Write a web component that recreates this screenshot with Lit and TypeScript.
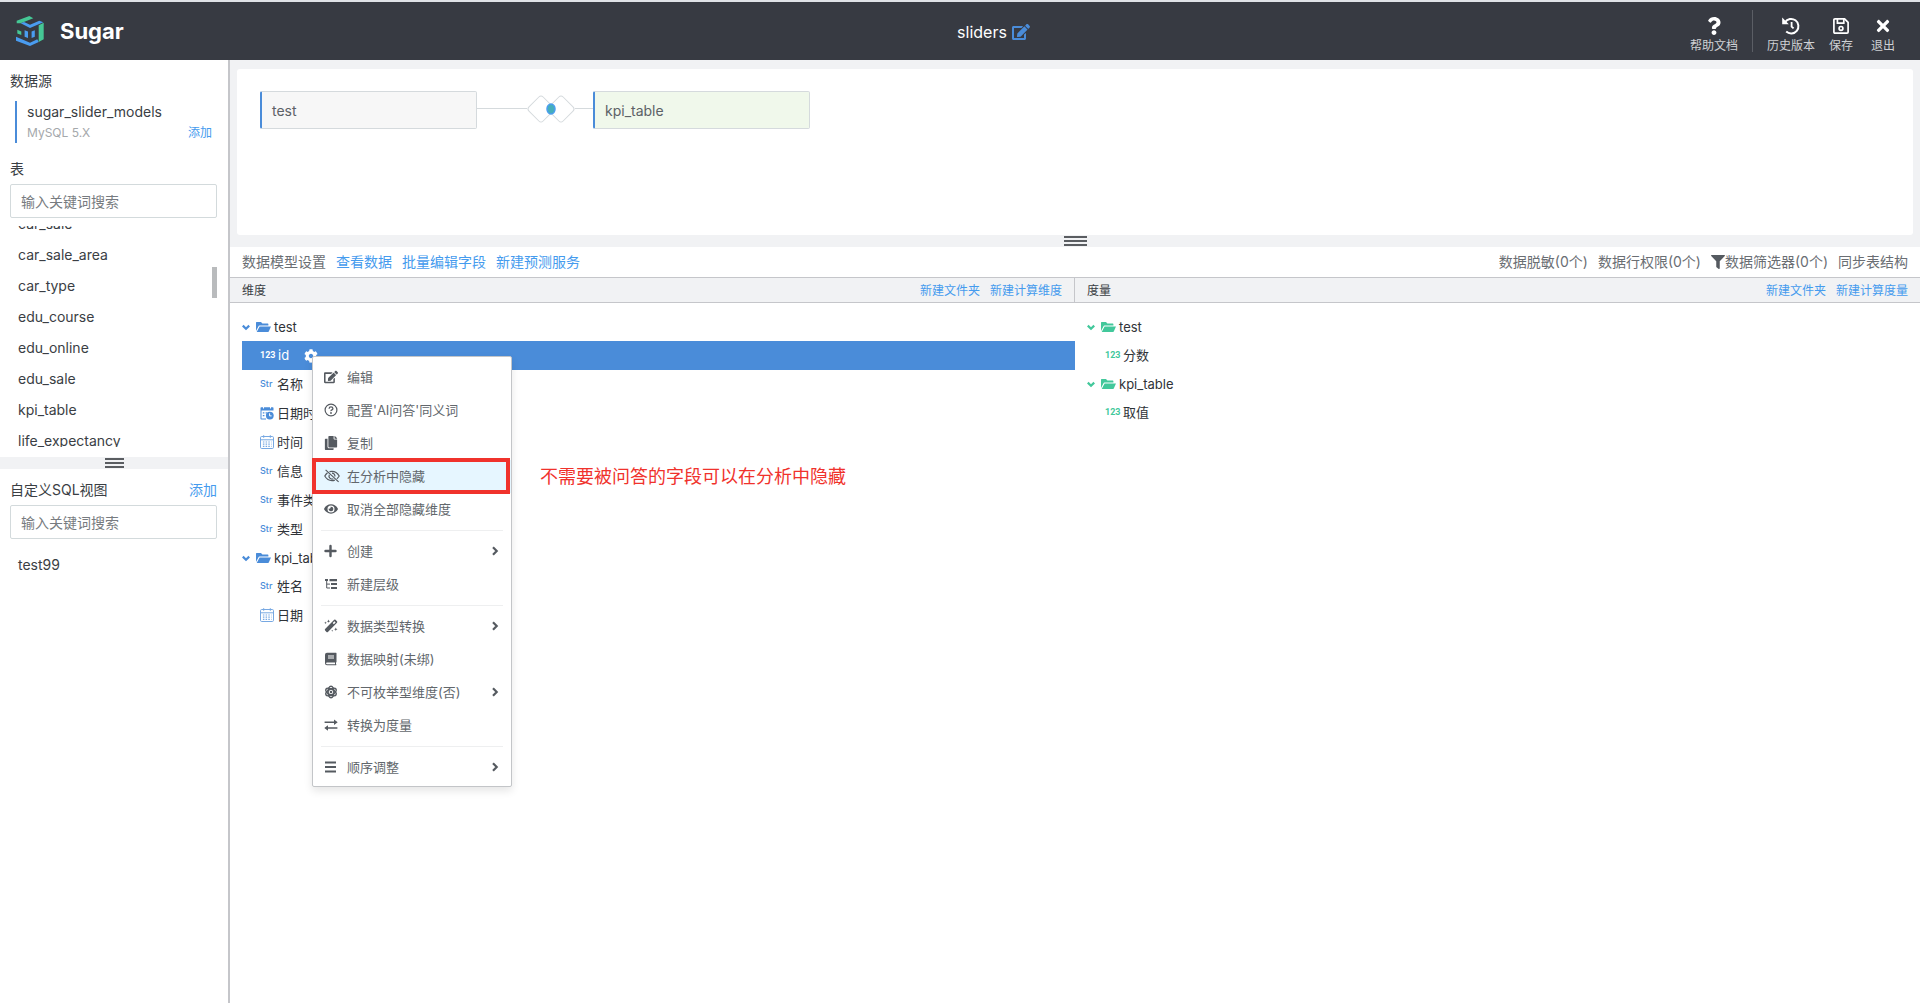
import { LitElement, html, svg, css, nothing, TemplateResult, SVGTemplateResult } from "lit";
import { customElement, property } from "lit/decorators.js";
import { classMap } from "lit/directives/class-map.js";

/* ---------- icons ---------- */

interface Glyph {
  box: string;
  body: SVGTemplateResult;
}

const solid = (box: string, d: string): Glyph => ({ box, body: svg`<path fill="currentColor" d=${d}></path>` });

const GLYPHS: Record<string, Glyph> = {
  question: solid(
    "0 0 384 512",
    "M202.021 0C122.202 0 70.503 32.703 29.914 91.026c-7.363 10.58-5.093 25.086 5.178 32.874l43.138 32.709c10.373 7.865 25.132 6.026 33.253-4.148 25.049-31.381 43.63-49.449 82.757-49.449 30.764 0 68.816 19.799 68.816 49.631 0 22.552-18.617 34.134-48.993 51.164-35.423 19.86-82.299 44.576-82.299 106.405V320c0 13.255 10.745 24 24 24h72.471c13.255 0 24-10.745 24-24v-5.773c0-42.86 125.268-44.645 125.268-160.627C377.504 66.256 286.902 0 202.021 0zM192 373.459c-38.196 0-69.271 31.075-69.271 69.271 0 38.195 31.075 69.27 69.271 69.27s69.271-31.075 69.271-69.271-31.075-69.27-69.271-69.27z"
  ),
  times: solid(
    "0 0 352 512",
    "M242.72 256l100.07-100.07c12.28-12.28 12.28-32.19 0-44.48l-22.24-22.24c-12.28-12.28-32.19-12.28-44.48 0L176 189.28 75.93 89.21c-12.28-12.28-32.19-12.28-44.48 0L9.21 111.45c-12.28 12.28-12.28 32.19 0 44.48L109.28 256 9.21 356.07c-12.28 12.28-12.28 32.19 0 44.48l22.24 22.24c12.28 12.28 32.2 12.28 44.48 0L176 322.72l100.07 100.07c12.28 12.28 32.2 12.28 44.48 0l22.24-22.24c12.28-12.28 12.28-32.19 0-44.48L242.72 256z"
  ),
  edit: solid(
    "0 0 576 512",
    "M402.6 83.2l90.2 90.2c3.8 3.8 3.8 10 0 13.8L274.4 405.6l-92.8 10.3c-12.4 1.4-22.9-9.1-21.5-21.5l10.3-92.8L388.8 83.2c3.8-3.8 10-3.8 13.8 0zm162-22.9l-48.8-48.8c-15.2-15.2-39.9-15.2-55.2 0l-35.4 35.4c-3.8 3.8-3.8 10 0 13.8l90.2 90.2c3.8 3.8 10 3.8 13.8 0l35.4-35.4c15.2-15.3 15.2-40 0-55.2zM384 346.2V448H64V128h229.8c3.2 0 6.2-1.3 8.5-3.5l40-40c7.6-7.6 2.2-20.5-8.5-20.5H48C21.5 64 0 85.5 0 112v352c0 26.5 21.5 48 48 48h352c26.5 0 48-21.5 48-48V306.2c0-10.7-12.9-16-20.5-8.5l-40 40c-2.2 2.3-3.5 5.3-3.5 8.5z"
  ),
  eye: solid(
    "0 0 576 512",
    "M572.52 241.4C518.29 135.59 410.93 64 288 64S57.68 135.64 3.48 241.41a32.35 32.35 0 0 0 0 29.19C57.71 376.41 165.07 448 288 448s230.32-71.64 284.52-177.41a32.35 32.35 0 0 0 0-29.19zM288 400a144 144 0 1 1 144-144 143.93 143.93 0 0 1-144 144zm0-240a95.31 95.31 0 0 0-25.31 3.79 47.85 47.85 0 0 1-66.9 66.9A95.78 95.78 0 1 0 288 160z"
  ),
  filter: solid(
    "0 0 512 512",
    "M487.976 0H24.028C2.71 0-8.047 25.866 7.058 40.971L192 225.941V432c0 7.831 3.821 15.17 10.237 19.662l80 55.98C298.02 518.69 320 507.493 320 487.98V225.941l184.947-184.97C520.021 25.896 509.338 0 487.976 0z"
  ),
  cog: solid(
    "0 0 512 512",
    "M487.4 315.7l-42.6-24.6c4.3-23.2 4.3-47 0-70.2l42.6-24.6c4.9-2.8 7.1-8.6 5.5-14-11.1-35.6-30-67.8-54.7-94.6-3.8-4.1-10-5.1-14.8-2.3L380.8 110c-17.9-15.4-38.5-27.3-60.8-35.1V25.8c0-5.6-3.9-10.5-9.4-11.7-36.7-8.2-74.3-7.8-109.2 0-5.5 1.2-9.4 6.1-9.4 11.7V75c-22.2 7.9-42.8 19.8-60.8 35.1L88.7 85.5c-4.9-2.8-11-1.9-14.8 2.3-24.7 26.7-43.6 58.9-54.7 94.6-1.7 5.4.6 11.2 5.5 14L67.3 221c-4.3 23.2-4.3 47 0 70.2l-42.6 24.6c-4.9 2.8-7.1 8.6-5.5 14 11.1 35.6 30 67.8 54.7 94.6 3.8 4.1 10 5.1 14.8 2.3l42.6-24.6c17.9 15.4 38.5 27.3 60.8 35.1v49.2c0 5.6 3.9 10.5 9.4 11.7 36.7 8.2 74.3 7.8 109.2 0 5.5-1.2 9.4-6.1 9.4-11.7v-49.2c22.2-7.9 42.8-19.8 60.8-35.1l42.6 24.6c4.9 2.8 11 1.9 14.8-2.3 24.7-26.7 43.6-58.9 54.7-94.6 1.5-5.5-.7-11.3-5.6-14.1zM256 336c-44.1 0-80-35.9-80-80s35.9-80 80-80 80 35.9 80 80-35.9 80-80 80z"
  ),
  copy: solid(
    "0 0 448 512",
    "M320 448v40c0 13.255-10.745 24-24 24H24c-13.255 0-24-10.745-24-24V120c0-13.255 10.745-24 24-24h72v296c0 30.879 25.121 56 56 56h168zm0-344V0H152c-13.255 0-24 10.745-24 24v368c0 13.255 10.745 24 24 24h272c13.255 0 24-10.745 24-24V128H344c-13.2 0-24-10.8-24-24zm120.971-31.029L375.029 7.029A24 24 0 0 0 358.059 0H352v96h96v-6.059a24 24 0 0 0-7.029-16.97z"
  ),
  folder: {
    box: "0 0 15 12",
    body: svg`<path fill="currentColor" d="M0 10V1.6Q0 1 .6 1H5l1.4 1.6h5.4q.6 0 .6.6v1.4H3.4Q2.8 4.600 2.500 5.200z"></path><path fill="currentColor" d="M3.600 5.600H15l-2.200 5q-.2.4-.7.4H.7z"></path>`,
  },
  history: {
    box: "0 0 18 18",
    body: svg`<g fill="none" stroke="currentColor" stroke-width="2"><path d="M3 5.200A7.300 7.300 0 1 1 4.200 14.600"></path><path d="M9.600 5v4.600l2 1.800" stroke-width="1.800"></path></g><path fill="currentColor" d="M.2.600V7.200h6.600z"></path>`,
  },
  save: {
    box: "-1 -1 18 18",
    body: svg`<g fill="none" stroke="currentColor" stroke-width="1.700"><path d="M2 .9h9.600l3.500 3.500V14q0 1.100-1.100 1.100H2Q.9 15.100.9 14V2Q.9.900 2 .900z"></path><path d="M4.400 1v4.200h6.400V1"></path><circle cx="8" cy="10.400" r="1.900"></circle></g>`,
  },
  down: {
    box: "1 0 8 8",
    body: svg`<path d="M1.800 2.600L5 5.700 8.200 2.600" fill="none" stroke="currentColor" stroke-width="2.200"></path>`,
  },
  right: {
    box: "0 0 8 10",
    body: svg`<path d="M2 1.300L5.700 5 2 8.700" fill="none" stroke="currentColor" stroke-width="2.200"></path>`,
  },
  help: {
    box: "0 0 14 14",
    body: svg`<g fill="none" stroke="currentColor"><circle cx="7" cy="7" r="5.900" stroke-width="1.200"></circle><path stroke-width="1.300" d="M5.100 5.700q.1-1.800 1.900-1.800t1.900 1.600q0 .9-1 1.400t-.9 1.300"></path></g><circle cx="7" cy="10" r=".9" fill="currentColor"></circle>`,
  },
  hidden: {
    box: "0 0 16 14",
    body: svg`<g fill="none" stroke="currentColor" stroke-width="1.200"><path d="M3.500 3.700Q1.900 5 .8 7q2.600 4.600 7.200 4.600 1.500 0 2.800-.5M5.500 2.700Q6.700 2.400 8 2.400 12.600 2.400 15.200 7q-.9 1.600-2.300 2.800"></path><path d="M5.300 5.700a3 3 0 0 0 4 4M8 4.100a3 3 0 0 1 2.900 3.400M1.600.900l13 12"></path></g>`,
  },
  plus: {
    box: "0 0 14 14",
    body: svg`<path d="M6.500 2v10M1.500 7h10" stroke="currentColor" stroke-width="2.400" stroke-linecap="round"></path>`,
  },
  level: {
    box: "0 0 14 14",
    body: svg`<path fill="currentColor" d="M1 2h3v2H1zM5.500 2H13v2.300H5.500zM7 6.100h6v2H7zM7 10h6v2H7z"></path><path d="M2.700 4v7H6M2.700 7.100H6" fill="none" stroke="currentColor"></path>`,
  },
  magic: {
    box: "0 0 14 14",
    body: svg`<path fill="currentColor" d="M10.200.8q.7-.5 1.300 0l1.500 1.500q.6.700 0 1.400L3.900 12.900q-.7.600-1.400 0L1.100 11.500q-.6-.7 0-1.400zM8.700 4.100l1.100 1.100 1.800-1.800-1.100-1.100z" fill-rule="evenodd"></path><path fill="currentColor" d="M4.500.6l.5 1.100 1.100.5L5 2.700l-.5 1.100L4 2.700l-1.100-.5L4 1.700zM1.500 2.500l.4.900.9.400-.9.400-.4.900-.4-.9-.9-.4.900-.4zM11.800 8.500l.5 1.200 1.200.5-1.200.5-.5 1.200-.5-1.200-1.200-.5 1.200-.5zM8.200 10.800l.3.700.7.300-.7.300-.3.700-.3-.7-.7-.3.700-.3z"></path>`,
  },
  book: {
    box: "0 0 14 14",
    body: svg`<path fill="currentColor" fill-rule="evenodd" d="M3 .8h9q.5 0 .5.500v8.600q0 .4-.5.500v1.900q.5.100.5.500t-.5.500H3q-2 0-2-2V2.800Q1 .8 3 .8zM3 10.400q-.9.100-.9.900t.9.900h8v-1.800zM4 3.500v1h6v-1zM4 5.500v1h6v-1z"></path>`,
  },
  atom: {
    box: "0 0 14 14",
    body: svg`<g fill="none" stroke="currentColor" stroke-width="1.500"><ellipse cx="7" cy="7" rx="5.800" ry="2.900" transform="rotate(30 7 7)"></ellipse><ellipse cx="7" cy="7" rx="5.800" ry="2.900" transform="rotate(90 7 7)"></ellipse><ellipse cx="7" cy="7" rx="5.800" ry="2.900" transform="rotate(150 7 7)"></ellipse></g><circle cx="7" cy="7" r="1.300" fill="currentColor"></circle>`,
  },
  swap: {
    box: "0 0 14 14",
    body: svg`<path d="M.6 4.200h10.500M13.400 10H3" stroke="currentColor" stroke-width="1.500"></path><path fill="currentColor" d="M10 1.500l3.700 2.700L10 6.900zM4 7.300L.3 10 4 12.700z"></path>`,
  },
  bars: {
    box: "0 0 14 14",
    body: svg`<path d="M1 2.500h11M1 7h11M1 11.500h11" stroke="currentColor" stroke-width="1.800"></path>`,
  },
  datetime: {
    box: "0 0 14 14",
    body: svg`<path fill="currentColor" d="M.5 2q0-.8.8-.8h11.400q.8 0 .8.800v2.600H.5zM.5 4h1v8.500H6v1H1.300q-.8 0-.8-.8zM2.800 6.200h1.600v1.300H2.800zM2.800 9h1.600v1.300H2.800zM5.600 6.200h1.300v1.300H5.600z"></path><path d="M3.500.3v2.200M10.500.3v2.200" stroke="#fff" stroke-width="1"></path><circle cx="9.800" cy="9.600" r="3.900" fill="currentColor"></circle><path d="M9.600 7.300v2.600h2" fill="none" stroke="#fff"></path>`,
  },
  date: {
    box: "0 0 14 14",
    body: svg`<g fill="none" stroke="currentColor" opacity=".75"><rect x=".5" y="1.500" width="13" height="12" rx="1.200"></rect><path d="M.5 4.800h13M3.700.2v2.600M10.300.2v2.600"></path><path stroke-width="1.200" stroke-dasharray="1.500 1.200" d="M2.900 7h8.600M2.900 9.200h8.600M2.900 11.400h8.600"></path></g>`,
  },
};

@customElement("ui-icon")
export class UiIcon extends LitElement {
  @property() name = "";

  static styles = css`
    :host {
      display: inline-flex;
      flex: none;
      width: 14px;
      height: 14px;
    }
    .glyph {
      width: 100%;
      height: 100%;
      display: block;
    }
  `;

  render() {
    const g = GLYPHS[this.name];
    return g ? html`<svg class="glyph" viewBox=${g.box} aria-hidden="true">${g.body}</svg>` : nothing;
  }
}

/* ---------- data ---------- */

type Kind = "num" | "str" | "date" | "datetime";

interface Field {
  name: string;
  kind: Kind;
  selected?: boolean;
}

interface Folder {
  name: string;
  fields: Field[];
}

interface MenuItem {
  icon: string;
  label: string;
  sub?: boolean;
  note?: string;
}

const TABLES = ["car_sale", "car_sale_area", "car_type", "edu_course", "edu_online", "edu_sale", "kpi_table", "life_expectancy"];

const DIMENSIONS: Folder[] = [
  {
    name: "test",
    fields: [
      { name: "id", kind: "num", selected: true },
      { name: "名称", kind: "str" },
      { name: "日期时间", kind: "datetime" },
      { name: "时间", kind: "date" },
      { name: "信息", kind: "str" },
      { name: "事件类型", kind: "str" },
      { name: "类型", kind: "str" },
    ],
  },
  {
    name: "kpi_table",
    fields: [
      { name: "姓名", kind: "str" },
      { name: "日期", kind: "date" },
    ],
  },
];

const MEASURES: Folder[] = [
  { name: "test", fields: [{ name: "分数", kind: "num" }] },
  { name: "kpi_table", fields: [{ name: "取值", kind: "num" }] },
];

const MENU: MenuItem[][] = [
  [
    { icon: "edit", label: "编辑" },
    { icon: "help", label: "配置'AI问答'同义词" },
    { icon: "copy", label: "复制" },
    { icon: "hidden", label: "在分析中隐藏", note: "不需要被问答的字段可以在分析中隐藏" },
    { icon: "eye", label: "取消全部隐藏维度" },
  ],
  [
    { icon: "plus", label: "创建", sub: true },
    { icon: "level", label: "新建层级" },
  ],
  [
    { icon: "magic", label: "数据类型转换", sub: true },
    { icon: "book", label: "数据映射(未绑)" },
    { icon: "atom", label: "不可枚举型维度(否)", sub: true },
    { icon: "swap", label: "转换为度量" },
  ],
  [{ icon: "bars", label: "顺序调整", sub: true }],
];

/* ---------- shared styles ---------- */

const base = css`
  * {
    box-sizing: border-box;
  }
  button,
  input {
    font: inherit;
    color: inherit;
    margin: 0;
    padding: 0;
    border: 0;
    background: none;
    text-align: left;
  }
  button {
    cursor: pointer;
  }
  a {
    color: #459bee;
    text-decoration: none;
  }
  ul {
    list-style: none;
    margin: 0;
    padding: 0;
  }
`;

/* ---------- context menu ---------- */

@customElement("field-menu")
export class FieldMenu extends LitElement {
  static styles = [
    base,
    css`
      :host {
        display: block;
        width: 200px;
        padding: 4px 0 2px;
        background: #fff;
        border: 1px solid #c3c5c8;
        border-radius: 2px;
        box-shadow: 0 4px 8px rgba(0, 0, 0, 0.1);
        color: #62676c;
        font-size: 13px;
      }
      .group + .group {
        margin: 4px 8px 0;
        padding-top: 4px;
        border-top: 1px solid #eeeff0;
      }
      .group + .group .item {
        margin: 0 -8px;
        width: calc(100% + 16px);
      }
      .item {
        position: relative;
        display: flex;
        align-items: center;
        width: 100%;
        height: 33px;
        padding: 0 12px 2px 11px;
        gap: 9px;
        white-space: nowrap;
      }
      .label {
        flex: 1;
      }
      .icon {
        color: #555a60;
      }
      .icon[name="hidden"] {
        width: 16px;
        margin-right: -2px;
      }
      .arrow {
        width: 8px;
        height: 10px;
        color: #555a60;
      }
      .marked {
        background: #e6f6ff;
      }
      .frame {
        position: absolute;
        inset: -2px 1px -1px -1px;
        border: 4px solid #f0322c;
      }
      .note {
        position: absolute;
        top: 7px;
        left: 227px;
        color: #f0322c;
        font-size: 18px;
      }
    `,
  ];

  private item(m: MenuItem): TemplateResult {
    return html`<button class=${classMap({ item: true, marked: !!m.note })} type="button" role="menuitem">
      <ui-icon class="icon" name=${m.icon}></ui-icon>
      <span class="label">${m.label}</span>
      ${m.sub ? html`<ui-icon class="arrow" name="right"></ui-icon>` : nothing}
      ${m.note ? html`<span class="frame"></span><span class="note">${m.note}</span>` : nothing}
    </button>`;
  }

  render() {
    return html`${MENU.map((group) => html`<div class="group">${group.map((m) => this.item(m))}</div>`)}`;
  }
}

/* ---------- field tree ---------- */

@customElement("field-tree")
export class FieldTree extends LitElement {
  @property({ attribute: false }) folders: Folder[] = [];

  static styles = [
    base,
    css`
      :host {
        display: block;
        padding: 10px 0 10px 12px;
        color: #2f3338;
        font-size: 13px;
        --accent: #4a8cd9;
      }
      :host([tone="measure"]) {
        --accent: #42c89b;
      }
      .folder {
        display: flex;
        align-items: center;
        height: 28px;
      }
      .chevron {
        width: 8px;
        height: 8px;
        margin-right: 6px;
        color: var(--accent);
      }
      .open {
        width: 15px;
        height: 12px;
        margin-right: 3px;
        color: var(--accent);
      }
      .field {
        position: relative;
        display: flex;
        align-items: center;
        height: 29px;
        padding: 0 0 2px 18px;
        gap: 3px;
      }
      .selected {
        background: #4a8cd9;
        color: #fff;
        --accent: #fff;
      }
      .type {
        color: var(--accent);
      }
      .tag {
        width: 14px;
        color: var(--accent);
        white-space: nowrap;
        font-size: 9px;
        font-weight: 500;
      }
      .num {
        width: 15px;
        font-family: Roboto, sans-serif;
        font-weight: 700;
      }
      .gear {
        width: 20px;
        height: 14px;
        margin-left: 12px;
      }
      .popup {
        position: absolute;
        top: 15px;
        left: 70px;
        z-index: 2;
      }
    `,
  ];

  private kind(k: Kind): TemplateResult {
    if (k === "num") return html`<span class="tag num">123</span>`;
    if (k === "str") return html`<span class="tag">Str</span>`;
    return html`<ui-icon class="type" name=${k}></ui-icon>`;
  }

  render() {
    return html`<ul>
      ${this.folders.map(
        (f) => html`<li>
          <div class="folder">
            <ui-icon class="chevron" name="down"></ui-icon><ui-icon class="open" name="folder"></ui-icon>${f.name}
          </div>
          <ul>
            ${f.fields.map(
              (x) => html`<li class=${classMap({ field: true, selected: !!x.selected })}>
                ${this.kind(x.kind)}<span>${x.name}</span>
                ${x.selected
                  ? html`<button class="gear" type="button" aria-label="设置"><ui-icon name="cog"></ui-icon></button>
                      <field-menu class="popup" role="menu"></field-menu>`
                  : nothing}
              </li>`
            )}
          </ul>
        </li>`
      )}
    </ul>`;
  }
}

/* ---------- page ---------- */

@customElement("app-root")
export class AppRoot extends LitElement {
  static styles = [
    base,
    css`
      :host {
        display: flex;
        flex-direction: column;
        min-height: 100vh;
        background: #fff;
        color: #3a3e44;
        font-family: Inter, "Noto Sans CJK SC", sans-serif;
        font-size: 14px;
        line-height: 20px;
      }
      .top {
        display: grid;
        grid-template-columns: 1fr auto 1fr;
        align-items: center;
        height: 60px;
        padding: 0 25px 0 16px;
        border-top: 2px solid #dfe2e6;
        background: #373a42;
        color: #fff;
      }
      .brand {
        display: flex;
        align-items: center;
        gap: 16px;
        font-size: 22px;
        font-weight: 700;
      }
      .logo {
        width: 28px;
        height: 30px;
      }
      .title {
        display: flex;
        align-items: center;
        gap: 5px;
        padding: 2px 0 0 76px;
        font-size: 16px;
      }
      .rename {
        display: flex;
        color: #4a8cd9;
      }
      .rename-icon {
        width: 18px;
        height: 16px;
      }
      .actions {
        display: flex;
        justify-content: flex-end;
        align-items: center;
        gap: 14px;
      }
      .action {
        display: flex;
        flex-direction: column;
        align-items: center;
        gap: 3px;
        padding-top: 8px;
        font-size: 12px;
        line-height: 16px;
        color: #cfd1d4;
      }
      .action:last-child {
        margin-left: 4px;
      }
      .action-icon {
        width: 18px;
        height: 18px;
        color: #fff;
      }
      .rule {
        width: 1px;
        height: 42px;
        background: #5b5e65;
      }
      .body {
        flex: 1;
        display: flex;
      }
      .side {
        width: 230px;
        border-right: 2px solid #c5c6ca;
      }
      .block {
        padding: 11px 11px 10px 10px;
      }
      .source {
        display: flex;
        flex-direction: column;
        margin: 10px 5px 16px;
        padding-left: 10px;
        border-left: 2px solid #4a8cd9;
        line-height: 22px;
      }
      .source-meta {
        display: flex;
        justify-content: space-between;
        line-height: 20px;
        font-size: 12px;
      }
      .muted {
        color: #a5a8ab;
      }
      .row {
        display: flex;
        justify-content: space-between;
      }
      .search {
        display: block;
        width: 100%;
        height: 34px;
        margin-top: 5px;
        padding: 0 10px;
        border: 1px solid #d3dadc;
        border-radius: 2px;
      }
      .search::placeholder {
        color: #777b80;
        opacity: 1;
      }
      .tables {
        position: relative;
        height: 221px;
        margin-top: 8px;
        overflow: hidden;
      }
      .names {
        line-height: 31px;
        padding-left: 8px;
      }
      .scrolled {
        margin-top: -18px;
      }
      .views {
        margin-top: 10px;
      }
      .thumb {
        position: absolute;
        right: 0;
        top: 41px;
        width: 5px;
        height: 31px;
        background: #b9bbbd;
      }
      .splitter {
        display: flex;
        flex-direction: column;
        align-items: center;
        justify-content: center;
        gap: 2px;
        height: 12px;
        background: #f1f2f4;
      }
      .line {
        width: 19px;
        height: 2px;
        background: #5a5d61;
      }
      .main {
        flex: 1;
        min-width: 0;
      }
      .stage {
        padding: 9px 7px 0;
        background: #f1f2f4;
      }
      .stage .line {
        width: 23px;
      }
      .canvas {
        display: flex;
        align-items: flex-start;
        height: 166px;
        padding: 22px 23px;
        border-radius: 3px;
        background: #fff;
      }
      .node {
        width: 217px;
        height: 38px;
        padding-left: 10px;
        border: 1px solid #d5dadd;
        border-left: 2px solid #4a8cd9;
        border-radius: 2px;
        line-height: 38px;
        background: #f7f7f7;
        color: #5c6167;
      }
      .joined {
        background: #f0f8eb;
      }
      .join {
        width: 116px;
        height: 38px;
      }
      .tools {
        display: flex;
        align-items: center;
        gap: 10px;
        height: 30px;
        padding: 0 12px;
        white-space: nowrap;
        color: #6a6e73;
      }
      .tool {
        display: flex;
        align-items: center;
      }
      .push {
        margin-left: auto;
      }
      .funnel {
        color: #555a60;
      }
      .columns {
        display: grid;
        grid-template-columns: 1fr 1fr;
      }
      .head {
        display: flex;
        align-items: center;
        gap: 10px;
        height: 26px;
        padding: 2px 12px 0;
        border: 1px solid #c5c6ca;
        border-width: 1px 0;
        background: #f1f2f4;
        font-size: 12px;
      }
      .head-left {
        border-right-width: 1px;
      }
    `,
  ];

  private handle(): TemplateResult {
    return html`<div class="splitter" role="separator">
      <span class="line"></span><span class="line"></span><span class="line"></span>
    </div>`;
  }

  private action(icon: string, label: string): TemplateResult {
    return html`<button class="action" type="button"><ui-icon class="action-icon" name=${icon}></ui-icon>${label}</button>`;
  }

  render() {
    return html`
      <header class="top">
        <div class="brand">
          <svg class="logo" viewBox="0 0 28 30" aria-hidden="true">
            <path fill="#45c795" d="M.7 7.300V4.700L13.300 0l4 2.300L4.700 7.300zM22.700 9.300l5-2.600v16.600l-5 2.700z"></path>
            <path fill="#4a9cf0" d="M4.700 7.300L8 6l6 2.700 9.300-4 4 1.500L14 12zM0 20.700l14 6 7.300-3.400 1.400 2.700L14 30 0 24.700z"></path>
            <path fill="#45c795" d="M1.300 13.700l4 1.900v3.300l-4-1.500z"></path>
            <path fill="#4a9cf0" d="M8.600 14.300l3.400 1.200V22l-3.400-1.200zM15.600 15.500l3.200-1.200v6.500L15.600 22z"></path>
          </svg>
          <span>Sugar</span>
        </div>
        <div class="title">
          sliders
          <button class="rename" type="button" aria-label="重命名"><ui-icon class="rename-icon" name="edit"></ui-icon></button>
        </div>
        <div class="actions">
          ${this.action("question", "帮助文档")}
          <span class="rule"></span>
          ${this.action("history", "历史版本")} ${this.action("save", "保存")} ${this.action("times", "退出")}
        </div>
      </header>
      <div class="body">
        <aside class="side">
          <section class="block">
            <div>数据源</div>
            <div class="source">
              <span>sugar_slider_models</span>
              <div class="source-meta"><span class="muted">MySQL 5.X</span><a href="#add-source">添加</a></div>
            </div>
            <label for="table-search">表</label>
            <input class="search" id="table-search" type="text" placeholder="输入关键词搜索" />
            <div class="tables">
              <ul class="names scrolled">
                ${TABLES.map((t) => html`<li>${t}</li>`)}
              </ul>
              <span class="thumb"></span>
            </div>
          </section>
          ${this.handle()}
          <section class="block">
            <div class="row"><label for="view-search">自定义SQL视图</label><a href="#add-view">添加</a></div>
            <input class="search" id="view-search" type="text" placeholder="输入关键词搜索" />
            <ul class="names views">
              <li>test99</li>
            </ul>
          </section>
        </aside>
        <main class="main">
          <div class="stage">
            <div class="canvas">
              <div class="node">test</div>
              <svg class="join" viewBox="0 0 116 38" aria-hidden="true">
                <g fill="none" stroke="#d5dadd">
                  <path d="M0 17.500H50M98 17.500H116"></path>
                  <rect x="54" y="8" width="20" height="20" rx="3" transform="rotate(45 64 18)"></rect>
                  <rect x="74" y="8" width="20" height="20" rx="3" transform="rotate(45 84 18)"></rect>
                </g>
                <ellipse cx="74" cy="18" rx="4" ry="5" fill="#45aebc" stroke="#4a9cf0" stroke-width="1.500"></ellipse>
              </svg>
              <div class="node joined">kpi_table</div>
            </div>
            ${this.handle()}
          </div>
          <div class="tools">
            <span>数据模型设置</span>
            <a href="#data">查看数据</a>
            <a href="#batch">批量编辑字段</a>
            <a href="#predict">新建预测服务</a>
            <button class="tool push" type="button">数据脱敏(0个)</button>
            <button class="tool" type="button">数据行权限(0个)</button>
            <button class="tool" type="button"><ui-icon class="funnel" name="filter"></ui-icon>数据筛选器(0个)</button>
            <button class="tool" type="button">同步表结构</button>
          </div>
          <div class="columns">
            <section>
              <div class="head head-left">
                <span>维度</span>
                <a class="push" href="#dim-folder">新建文件夹</a>
                <a href="#dim-calc">新建计算维度</a>
              </div>
              <field-tree .folders=${DIMENSIONS}></field-tree>
            </section>
            <section>
              <div class="head">
                <span>度量</span>
                <a class="push" href="#measure-folder">新建文件夹</a>
                <a href="#measure-calc">新建计算度量</a>
              </div>
              <field-tree tone="measure" .folders=${MEASURES}></field-tree>
            </section>
          </div>
        </main>
      </div>
    `;
  }
}
